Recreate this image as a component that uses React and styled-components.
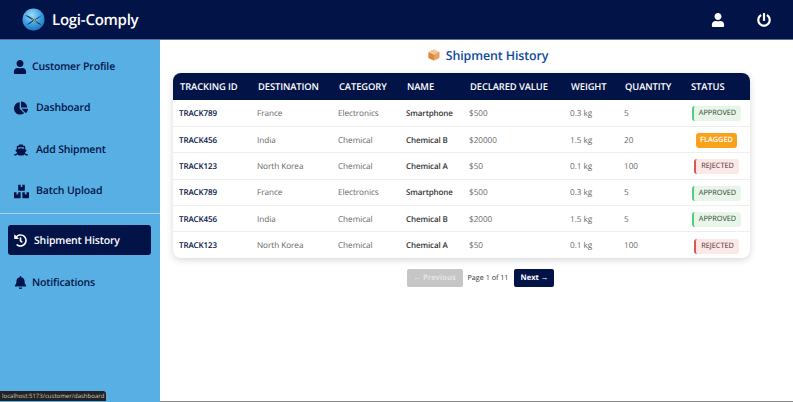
import React from "react";
import styled, { createGlobalStyle } from "styled-components";
import { FaUser, FaChartPie, FaShip, FaBoxes, FaHistory, FaBell, FaPowerOff } from "react-icons/fa";

const Global = createGlobalStyle`
  html, body { margin: 0; padding: 0; height: 100%; background: #fff; overflow: hidden; }
  body { font-family: "Open Sans", "Liberation Sans", sans-serif; text-rendering: geometricPrecision; }
  #root { height: 100%; }
`;

const navy = "#021348";

const Page = styled.div`
  width: 793px; height: 402px; display: flex; flex-direction: column; position: relative; overflow: hidden;
`;
const TopBar = styled.header`
  flex: none; background: ${navy}; border-bottom: 1px solid #5f6f96;
  display: flex; align-items: center; padding: 0 22px 0 22px; height: 39px;
`;
const Brand = styled.div`
  display: flex; align-items: center; gap: 7px; color: #fff; font-size: 15px; font-weight: 600; flex: 1; letter-spacing: -0.25px;
`;
const TopIcons = styled.div`
  display: flex; align-items: center; gap: 32px; color: #fff; font-size: 14px;
`;
const IconSlot = styled.span`display: flex;`;
const Body = styled.div`
  flex: 1; display: flex; min-height: 0; border-bottom: 1px solid #8a8a8a;
`;
const Sidebar = styled.nav`
  width: 160px; flex: none; background: #57afe4; padding-top: 6px; box-sizing: border-box; margin-bottom: -1px;
`;
const NavItem = styled.div`
  display: flex; align-items: center; height: 41.5px;
  padding-left: ${p => p.$pl || 13}px; gap: ${p => p.$gap || 5}px;
  color: ${navy}; font-size: 10.5px; font-weight: 600; letter-spacing: -0.15px;
  svg { font-size: ${p => p.$icon || 14}px; flex: none; }
`;
const Divider = styled.div`
  height: 1px; background: #a8d3ee; margin: 1px 0 11px;
`;
const ActiveItem = styled.div`
  display: flex; align-items: center; height: 30px; margin: 0 9px 7px 8px; padding: 1px 0 0 6px; box-sizing: border-box; gap: 7px;
  background: ${navy}; border-radius: 3px; color: #fff; font-size: 10.5px; font-weight: 600; letter-spacing: -0.15px;
  svg { font-size: 13px; flex: none; }
`;
const Main = styled.main`
  flex: 1; padding: 5px 0 0 12.5px; min-width: 0;
`;
const Title = styled.h1`
  margin: 0 0 8px; width: 577px; height: 20px; padding-left: 54px; box-sizing: border-box;
  display: flex; align-items: center; justify-content: center; gap: 6px;
  font-size: 12.4px; font-weight: 600; color: #0f4aa0; letter-spacing: -0.1px;
`;
const TableCard = styled.div`
  width: 577px; border-radius: 8px; overflow: hidden; background: #fff;
  box-shadow: 0 2px 7px rgba(0,0,0,.16);
`;
const Table = styled.table`
  width: 100%; border-collapse: collapse; table-layout: fixed;
`;
const Head = styled.th`
  background: ${navy}; color: #fff; height: 27px; padding: 0 0 0 7.5px; text-align: left;
  font-size: 9.4px; font-weight: 600; white-space: nowrap; letter-spacing: -0.1px;
`;
const Row = styled.tr`
  height: 26.4px; border-bottom: 1px solid #eeeeee;
  &:last-child { border-bottom: none; }
`;
const Cell = styled.td`
  padding: 1px 0 0 6.5px; white-space: nowrap;
  font-size: ${p => (p.$kind ? 8 : 8.2)}px;
  letter-spacing: ${p => (p.$kind ? -0.12 : -0.05)}px;
  color: ${p => (p.$kind === "id" ? navy : p.$kind === "name" ? "#333" : "#666")};
  font-weight: ${p => (p.$kind ? 600 : 400)};
`;
const StatusCell = styled.td`
  padding: 2px 0 0; text-align: center; vertical-align: middle; font-size: 0;
`;
const tones = {
  APPROVED: { bg: "#e8f5e9", fg: "#2c3b2e", bar: "#4fce7f", barW: 2, pad: 5, weight: 500 },
  REJECTED: { bg: "#fde8e8", fg: "#4a2a2a", bar: "#e0564f", barW: 2, pad: 5, weight: 500 },
  FLAGGED: { bg: "#f9a11b", fg: "#fff", bar: "#f9a11b", barW: 0, pad: 4, weight: 600 },
};
const Badge = styled.span`
  display: inline-block; height: 15px; line-height: 15px; padding: 0 ${p => tones[p.$s].pad}px; box-sizing: border-box;
  vertical-align: middle;
  font-size: 7.4px; font-weight: ${p => tones[p.$s].weight}; border-radius: 3px; letter-spacing: -0.05px;
  background: ${p => tones[p.$s].bg}; color: ${p => tones[p.$s].fg};
  border-left: ${p => tones[p.$s].barW}px solid ${p => tones[p.$s].bar};
`;
const Pager = styled.div`
  width: 577px; padding-left: 39px; box-sizing: border-box; margin-top: 11px;
  display: flex; align-items: center; justify-content: center; gap: 5px;
`;
const PageBtn = styled.div`
  height: 18px; width: ${p => p.$w}px; display: flex; align-items: center; justify-content: center;
  border-radius: 2px; font-size: 7.6px; font-weight: 700; color: ${p => (p.$off ? "#e4e4e4" : "#fff")};
  background: ${p => (p.$off ? "#c6c6c6" : navy)};
`;
const PageText = styled.span`
  font-size: 7.2px; font-weight: 500; color: #333; white-space: nowrap; margin-right: 1px;
`;
const StatusTip = styled.div`
  position: absolute; left: 0; bottom: 1px; width: 106px; height: 10px; background: #222;
  border-top-right-radius: 3px; color: #c8c8c8; font-size: 6.05px; line-height: 10px; padding-left: 2px; box-sizing: border-box;
  white-space: nowrap;
`;

const Logo = () => (
  <svg width="23" height="23" viewBox="0 0 23 23">
    <defs>
      <radialGradient id="g" cx="42%" cy="30%" r="75%">
        <stop offset="0" stopColor="#9fdcf8" />
        <stop offset="0.55" stopColor="#3fa3e4" />
        <stop offset="1" stopColor="#1a6fbc" />
      </radialGradient>
    </defs>
    <circle cx="11.500" cy="11.500" r="11" fill="url(#g)" />
    <path d="M3 7c3.500 .5 7 3 9.500 5 2.500-2 5-4 8-5-2.500 1.800-5 3.700-6.800 5.600 2 1.700 4 2.800 5.800 4.400-3-.9-5.500-2.600-7.500-3.800-2.200 1.400-4.500 3-7.500 3.800 2-1.700 4.400-3 6.200-4.400C8.800 10.500 5.500 9 3 7z" fill="#0b2a5e" />
    <path d="M9.500 11c1.200 .6 2 1.200 3 1.800 1-.6 2-1.200 3-1.800M9.500 14.800c1.200-.6 2-1.300 3-2 1 .7 2 1.400 3 2" stroke="#c9d36a" strokeWidth=".7" fill="none" />
  </svg>
);

const Cube = () => (
  <svg width="12" height="12" viewBox="0 0 12 12">
    <path d="M6 .5l5 2.200q.5 .3 .5 1v4.600q0 .7-.5 1l-5 2.200-5-2.200q-.5-.3-.5-1V3.700q0-.7 .5-1z" fill="#eda055" />
    <path d="M6 5.800V11.500L1 9.300q-.5-.3-.5-1V3.700z" fill="#dd8a3a" />
    <path d="M6 .5l5 2.300-5 3-5.300-3z" fill="#f6cfa0" />
    <path d="M3.200 1.800l5 2.700v1.500" stroke="#b5c6d6" strokeWidth=".9" fill="none" />
  </svg>
);

const rows = [
  ["TRACK789", "France", "Electronics", "Smartphone", "$500", "0.3 kg", "5", "APPROVED"],
  ["TRACK456", "India", "Chemical", "Chemical B", "$20000", "1.5 kg", "20", "FLAGGED"],
  ["TRACK123", "North Korea", "Chemical", "Chemical A", "$50", "0.1 kg", "100", "REJECTED"],
  ["TRACK789", "France", "Electronics", "Smartphone", "$500", "0.3 kg", "5", "APPROVED"],
  ["TRACK456", "India", "Chemical", "Chemical B", "$2000", "1.5 kg", "5", "APPROVED"],
  ["TRACK123", "North Korea", "Chemical", "Chemical A", "$50", "0.1 kg", "100", "REJECTED"],
];
const headers = ["TRACKING ID", "DESTINATION", "CATEGORY", "NAME", "DECLARED VALUE", "WEIGHT", "QUANTITY", "STATUS"];
const widths = [78, 81, 68, 63, 101, 54, 66, 66];

export default function App() {
  return (
    <Page>
      <Global />
      <TopBar>
        <Brand><Logo />Logi-Comply</Brand>
        <TopIcons>
          <IconSlot><FaUser /></IconSlot>
          <IconSlot><FaPowerOff /></IconSlot>
        </TopIcons>
      </TopBar>
      <Body>
        <Sidebar>
          <NavItem><FaUser />Customer Profile</NavItem>
          <NavItem $pl={14} $gap={8}><FaChartPie />Dashboard</NavItem>
          <NavItem $pl={14} $gap={8}><FaShip />Add Shipment</NavItem>
          <NavItem $pl={14} $gap={7} $icon={15}><FaBoxes />Batch Upload</NavItem>
          <Divider />
          <ActiveItem><FaHistory />Shipment History</ActiveItem>
          <NavItem $pl={13.5} $gap={5.5} $icon={13}><FaBell />Notifications</NavItem>
        </Sidebar>
        <Main>
          <Title><Cube />Shipment History</Title>
          <TableCard>
            <Table>
              <colgroup>{widths.map((w, i) => <col key={i} width={w} />)}</colgroup>
              <thead>
                <tr>{headers.map(h => <Head key={h}>{h}</Head>)}</tr>
              </thead>
              <tbody>
                {rows.map((r, i) => (
                  <Row key={i}>
                    <Cell $kind="id">{r[0]}</Cell>
                    <Cell>{r[1]}</Cell>
                    <Cell>{r[2]}</Cell>
                    <Cell $kind="name">{r[3]}</Cell>
                    <Cell>{r[4]}</Cell>
                    <Cell>{r[5]}</Cell>
                    <Cell>{r[6]}</Cell>
                    <StatusCell><Badge $s={r[7]}>{r[7]}</Badge></StatusCell>
                  </Row>
                ))}
              </tbody>
            </Table>
          </TableCard>
          <Pager>
            <PageBtn $off $w={56}>← Previous</PageBtn>
            <PageText>Page 1 of 11</PageText>
            <PageBtn $w={40}>Next →</PageBtn>
          </Pager>
        </Main>
      </Body>
      <StatusTip>localhost:5173/customer/dashboard</StatusTip>
    </Page>
  );
}
